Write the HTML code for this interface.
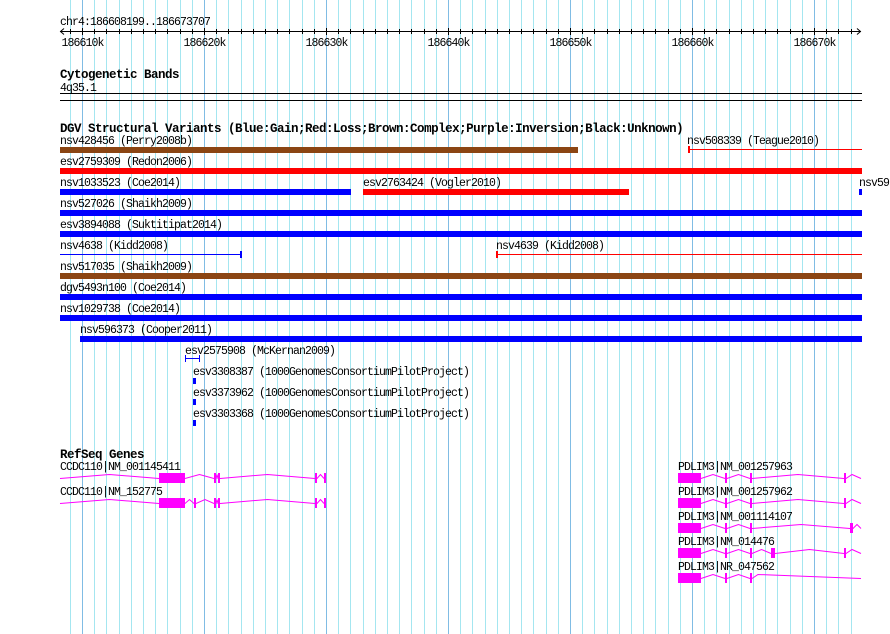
<!DOCTYPE html>
<html><head><meta charset="utf-8"><style>
html,body{margin:0;padding:0;background:#fff;width:890px;height:634px;overflow:hidden}
svg{display:block}
text{font-family:"Liberation Mono",monospace;font-size:11.5px;letter-spacing:-0.9px;fill:#000}
.b{font-weight:bold;font-size:12.5px;letter-spacing:-0.5px}
#grid line{shape-rendering:crispEdges}
</style></head><body>
<svg id="s" width="890" height="634" xmlns="http://www.w3.org/2000/svg">
<g id="grid"></g>
<text x="60" y="25">chr4:186608199..186673707</text>
<line x1="60" y1="31.5" x2="861" y2="31.5" stroke="#000"/>
<polyline points="64,28.5 60.5,31.5 64,34.5" fill="none" stroke="#000"/>
<polyline points="857,28.5 860.5,31.5 857,34.5" fill="none" stroke="#000"/>
<g id="ticks"></g>
<text class="b" x="60" y="78">Cytogenetic Bands</text>
<text x="60" y="91">4q35.1</text>
<rect x="60" y="93" width="802" height="1" fill="#000"/>
<rect x="60" y="100" width="802" height="1" fill="#000"/>
<text class="b" x="60" y="132">DGV Structural Variants (Blue:Gain;Red:Loss;Brown:Complex;Purple:Inversion;Black:Unknown)</text>

<text x="60" y="144">nsv428456 (Perry2008b)</text>
<rect x="60" y="147" width="518" height="6" fill="#8b4513"/>
<text x="687" y="144">nsv508339 (Teague2010)</text>
<rect x="688" y="149" width="174" height="1" fill="#f00"/><rect x="688" y="146" width="2" height="7" fill="#f00"/>

<text x="60" y="165">esv2759309 (Redon2006)</text>
<rect x="60" y="168" width="802" height="6" fill="#f00"/>

<text x="60" y="186">nsv1033523 (Coe2014)</text>
<rect x="60" y="189" width="291" height="6" fill="#00f"/>
<text x="363" y="186">esv2763424 (Vogler2010)</text>
<rect x="363" y="189" width="266" height="6" fill="#f00"/>
<text x="859" y="186">nsv59</text>
<rect x="859" y="189" width="3" height="6" fill="#00f"/>

<text x="60" y="207">nsv527026 (Shaikh2009)</text>
<rect x="60" y="210" width="802" height="6" fill="#00f"/>
<text x="60" y="228">esv3894088 (Suktitipat2014)</text>
<rect x="60" y="231" width="802" height="6" fill="#00f"/>

<text x="60" y="249">nsv4638 (Kidd2008)</text>
<rect x="60" y="254" width="181" height="1" fill="#00f"/><rect x="240" y="251" width="2" height="7" fill="#00f"/>
<text x="496" y="249">nsv4639 (Kidd2008)</text>
<rect x="497" y="254" width="365" height="1" fill="#f00"/><rect x="496" y="251" width="2" height="7" fill="#f00"/>

<text x="60" y="270">nsv517035 (Shaikh2009)</text>
<rect x="60" y="273" width="802" height="6" fill="#8b4513"/>
<text x="60" y="291">dgv5493n100 (Coe2014)</text>
<rect x="60" y="294" width="802" height="6" fill="#00f"/>
<text x="60" y="312">nsv1029738 (Coe2014)</text>
<rect x="60" y="315" width="802" height="6" fill="#00f"/>
<text x="80" y="333">nsv596373 (Cooper2011)</text>
<rect x="80" y="336" width="782" height="6" fill="#00f"/>

<text x="185" y="354">esv2575908 (McKernan2009)</text>
<rect x="185" y="358" width="14" height="1" fill="#00f"/><rect x="185" y="355" width="1" height="7" fill="#00f"/><rect x="199" y="355" width="1" height="7" fill="#00f"/>
<text x="193" y="375">esv3308387 (1000GenomesConsortiumPilotProject)</text>
<rect x="193" y="378" width="3" height="6" fill="#00f"/>
<text x="193" y="396">esv3373962 (1000GenomesConsortiumPilotProject)</text>
<rect x="193" y="399" width="3" height="6" fill="#00f"/>
<text x="193" y="417">esv3303368 (1000GenomesConsortiumPilotProject)</text>
<rect x="193" y="420" width="3" height="6" fill="#00f"/>

<text class="b" x="60" y="458">RefSeq Genes</text>
<text x="60" y="470">CCDC110|NM_001145411</text>
<text x="60" y="495">CCDC110|NM_152775</text>
<text x="678" y="470">PDLIM3|NM_001257963</text>
<text x="678" y="495">PDLIM3|NM_001257962</text>
<text x="678" y="520">PDLIM3|NM_001114107</text>
<text x="678" y="545">PDLIM3|NM_014476</text>
<text x="678" y="570">PDLIM3|NR_047562</text>
<g id="genes"></g>
</svg>
<script>
var NS="http://www.w3.org/2000/svg";
function el(p,t,a){var e=document.createElementNS(NS,t);for(var k in a)e.setAttribute(k,a[k]);p.appendChild(e);return e;}
var g=document.getElementById("grid"),tk=document.getElementById("ticks");
function X(k){return 60+(k-186608.199)*12.2;}
for(var k=186609;k<=186673;k++){
 var x=Math.round(X(k))+0.5, maj=(k%10==0);
 el(g,"line",{x1:x,y1:0,x2:x,y2:634,stroke:maj?"#80bce4":"#a4e6f0","stroke-width":1});
 el(tk,"line",{x1:x,y1:maj?28:29,x2:x,y2:maj?35:34,stroke:"#000"});
 if(maj){var t=el(tk,"text",{x:x,y:46,"text-anchor":"middle"});t.textContent=k+"k";}
}
var G=document.getElementById("genes"),C="#f0f";
function gene(yc,start,end,exons){
 var pts=[],cur=start;
 var ex=exons.slice().sort(function(a,b){return a[0]-b[0]});
 function hat(a,b){if(b<=a)return;var m=(a+b)/2;pts.push(a+","+(yc+0.5),m+","+(yc-3.5),b+","+(yc+0.5));}
 ex.forEach(function(e){hat(cur,e[0]);cur=e[1];});
 if(end>cur){pts.push(cur+","+(yc+0.5),(cur+Math.min(6,(end-cur)/2))+","+(yc-3.5),end+","+(yc+0.5));}
 el(G,"polyline",{points:pts.join(" "),fill:"none",stroke:C,"stroke-width":1});
 ex.forEach(function(e){el(G,"rect",{x:e[0],y:yc-5,width:Math.max(2,e[1]-e[0]),height:10,fill:C});});
}
gene(478,60,326,[[159,185],[214,216],[218,220],[315,317],[324,326]]);
gene(503,60,326,[[159,185],[194,196],[214,216],[218,220],[315,317],[324,326]]);
gene(478,678,861,[[678,701],[725,727],[750,752],[844,846]]);
gene(503,678,861,[[678,701],[725,727],[750,752],[844,846]]);
gene(528,678,861,[[678,701],[725,727],[750,752],[850,853]]);
gene(553,678,861,[[678,701],[725,727],[750,752],[771,775],[844,846]]);
gene(578,678,861,[[678,701],[725,727],[750,752]]);
</script>
</body></html>
